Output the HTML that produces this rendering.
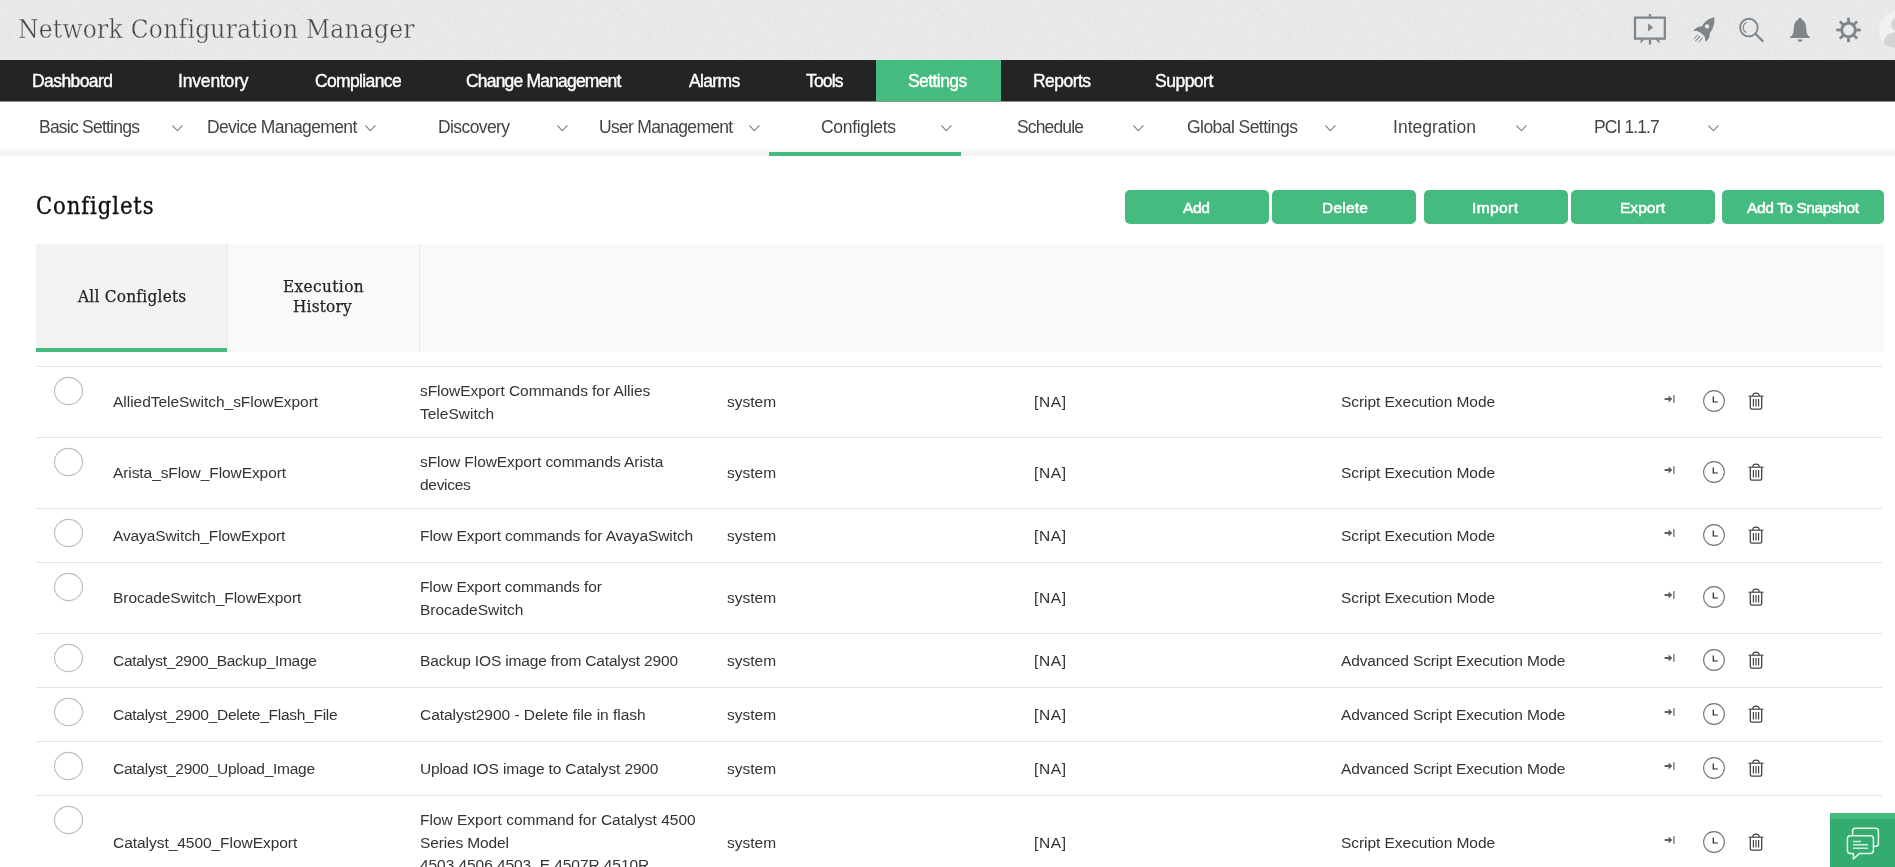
<!DOCTYPE html>
<html lang="en"><head><meta charset="utf-8"><title>Network Configuration Manager</title>
<style>
html,body{margin:0;padding:0;background:#fff;}
body{font-variant-ligatures:none;width:1895px;height:867px;overflow:hidden;position:relative;font-family:"Liberation Sans",sans-serif;}
.a{position:absolute;display:block;}
.t{position:absolute;white-space:nowrap;line-height:1;will-change:transform;}
.s{font-family:"Liberation Sans",sans-serif;}
.r{font-family:"Liberation Serif",serif;}
.d{font-family:"DejaVu Serif","Liberation Serif",serif;font-stretch:condensed;}
.nav{-webkit-text-stroke:0.4px #fff;}
.hd{-webkit-text-stroke:0.35px #111;}
.ttl{-webkit-text-stroke:0.4px #e8e9ea;}
.btn{-webkit-text-stroke:0.55px #fff;}
.tb{-webkit-text-stroke:0.25px #222;}
.hline{position:absolute;left:36px;width:1846px;height:1px;background:#e3e3e3;}
.gbtn{position:absolute;top:190px;height:34px;border-radius:5px;background:#45bb7f;}
</style></head>
<body>
<div class="a" style="left:0;top:0;width:1895px;height:60px;background:#ebeced"></div>
<svg class="a" style="left:0;top:0" width="1895" height="60"><filter id="nz" x="0" y="0" width="100%" height="100%"><feTurbulence type="fractalNoise" baseFrequency="0.8" numOctaves="2" seed="3"/><feColorMatrix type="matrix" values="0 0 0 0 0.45  0 0 0 0 0.45  0 0 0 0 0.45  0.55 0.55 0 0 -0.42"/></filter><rect width="1895" height="60" filter="url(#nz)" opacity="0.5"/></svg>

<svg class="a" style="left:1630px;top:10px" width="40" height="40" viewBox="0 0 40 40">
 <g fill="#808487">
 <path d="M3.9 6.5 H35.9 V29.8 H3.9 Z M6.1 8.8 V27.5 H33.7 V8.8 Z" fill-rule="evenodd"/>
 <rect x="18.8" y="4.1" width="2.3" height="2.6"/>
 <rect x="18.8" y="29.6" width="2.3" height="4.8"/>
 <path d="M18.1 13.6 L23.2 17.6 L18.1 21.6 Z"/>
 <path d="M11 29.6 H14.2 L11.4 32.8 H10.2 Z"/>
 <path d="M25.8 29.6 H29 L29.8 32.8 H28.6 Z"/>
 </g>
</svg>
<svg class="a" style="left:1690px;top:14px" width="28" height="30" viewBox="0 0 28 30">
 <g fill="#808487">
 <path d="M24.4 3.3 C19 4.2 14.6 7.6 11.7 12.6 C8.2 12.4 5.2 14.2 3.1 16.9 C5.4 16.6 7.6 16.9 9.4 18 C11.5 19.2 13.7 21 15 23.2 C14.9 24.8 15.2 26.4 16 27.6 C18.6 25.6 20 22.6 19.8 19.2 C23.4 14.8 24.9 9.2 24.4 3.3 Z M17 10.2 A2.2 2.2 0 1 0 17.01 10.2 Z" fill-rule="evenodd"/>
 <path d="M7.3 20.4 L8 21 L4.3 25.2 L3.7 24.7 Z M9.6 21.8 L10.5 22.5 L5.8 27.6 L5 27 Z M12 23.6 L12.8 24.3 L9.2 28.3 L8.5 27.7 Z"/>
 </g>
</svg>
<svg class="a" style="left:1736px;top:14px" width="30" height="30" viewBox="0 0 30 30">
 <g fill="none" stroke="#808487">
 <circle cx="12.9" cy="13.6" r="8.8" stroke-width="1.9"/>
 <path d="M10.6 8.4 A5.6 5.6 0 0 0 10.4 18.6" stroke-width="1.1"/>
 <path d="M19.6 20 L26.6 27" stroke-width="2.3" stroke-linecap="round"/>
 </g>
</svg>
<svg class="a" style="left:1786px;top:14px" width="28" height="30" viewBox="0 0 28 30">
 <g fill="#808487">
 <path d="M14 3.8 C15.1 3.8 15.8 4.6 15.8 5.8 C18.6 6.8 19.9 9.6 20.1 13 C20.3 17.2 20.8 19.6 21.6 20.9 C22.3 21.9 23.9 22.4 23.9 23.2 V24.1 H4.1 V23.2 C4.1 22.4 5.7 21.9 6.4 20.9 C7.2 19.6 7.7 17.2 7.9 13 C8.1 9.6 9.4 6.8 12.2 5.8 C12.2 4.6 12.9 3.8 14 3.8 Z"/>
 <path d="M11.6 25.4 H16.4 C16.2 26.8 15.2 27.7 14 27.7 C12.8 27.7 11.8 26.8 11.6 25.4 Z"/>
 </g>
</svg>
<svg class="a" style="left:1834px;top:15px" width="30" height="30" viewBox="0 0 30 30">
 <g transform="translate(14.5 15)">
 <circle r="6.85" fill="none" stroke="#808487" stroke-width="2.9"/>
 <g fill="#808487">
  <rect x="-1.4" y="-12.2" width="2.8" height="4.6"/>
  <rect x="-1.4" y="-12.2" width="2.8" height="4.6" transform="rotate(45)"/>
  <rect x="-1.4" y="-12.2" width="2.8" height="4.6" transform="rotate(90)"/>
  <rect x="-1.4" y="-12.2" width="2.8" height="4.6" transform="rotate(135)"/>
  <rect x="-1.4" y="-12.2" width="2.8" height="4.6" transform="rotate(180)"/>
  <rect x="-1.4" y="-12.2" width="2.8" height="4.6" transform="rotate(225)"/>
  <rect x="-1.4" y="-12.2" width="2.8" height="4.6" transform="rotate(270)"/>
  <rect x="-1.4" y="-12.2" width="2.8" height="4.6" transform="rotate(315)"/>
 </g></g>
</svg>
<svg class="a" style="left:1877px;top:11px" width="18" height="38" viewBox="0 0 18 38">
 <circle cx="20.5" cy="19" r="18.5" fill="#f1f1f1"/>
 <circle cx="20.5" cy="13.5" r="6.6" fill="#d4d4d4"/>
 <path d="M6.5 31.5 C7.5 24.5 13 21 20.5 21 V37 C14 37 9 35 6.5 31.5 Z" fill="#d4d4d4"/>
</svg>

<div class="a" style="left:0;top:60px;width:1895px;height:41px;background:#242424"></div>
<div class="a" style="left:0;top:101px;width:1895px;height:1px;background:#8f8f8f"></div>
<div class="a" style="left:876px;top:60px;width:125px;height:41px;background:#45bb7f"></div>
<div class="a" style="left:0;top:146px;width:1895px;height:10px;background:linear-gradient(#ffffff,#f8f8f8 50%,#f0f0f0)"></div>
<div class="a" style="left:769px;top:152px;width:192px;height:4px;background:#45bb7f"></div>
<svg class="a" style="left:171.9px;top:125px" width="11" height="7" viewBox="0 0 11 7"><path d="M0.4 0.5 L5.4 5.7 L10.4 0.5" fill="none" stroke="#888" stroke-width="1.1"/></svg>
<svg class="a" style="left:364.9px;top:125px" width="11" height="7" viewBox="0 0 11 7"><path d="M0.4 0.5 L5.4 5.7 L10.4 0.5" fill="none" stroke="#888" stroke-width="1.1"/></svg>
<svg class="a" style="left:556.9px;top:125px" width="11" height="7" viewBox="0 0 11 7"><path d="M0.4 0.5 L5.4 5.7 L10.4 0.5" fill="none" stroke="#888" stroke-width="1.1"/></svg>
<svg class="a" style="left:748.9px;top:125px" width="11" height="7" viewBox="0 0 11 7"><path d="M0.4 0.5 L5.4 5.7 L10.4 0.5" fill="none" stroke="#888" stroke-width="1.1"/></svg>
<svg class="a" style="left:940.8px;top:125px" width="11" height="7" viewBox="0 0 11 7"><path d="M0.4 0.5 L5.4 5.7 L10.4 0.5" fill="none" stroke="#888" stroke-width="1.1"/></svg>
<svg class="a" style="left:1132.6px;top:125px" width="11" height="7" viewBox="0 0 11 7"><path d="M0.4 0.5 L5.4 5.7 L10.4 0.5" fill="none" stroke="#888" stroke-width="1.1"/></svg>
<svg class="a" style="left:1324.8px;top:125px" width="11" height="7" viewBox="0 0 11 7"><path d="M0.4 0.5 L5.4 5.7 L10.4 0.5" fill="none" stroke="#888" stroke-width="1.1"/></svg>
<svg class="a" style="left:1516.3px;top:125px" width="11" height="7" viewBox="0 0 11 7"><path d="M0.4 0.5 L5.4 5.7 L10.4 0.5" fill="none" stroke="#888" stroke-width="1.1"/></svg>
<svg class="a" style="left:1707.9px;top:125px" width="11" height="7" viewBox="0 0 11 7"><path d="M0.4 0.5 L5.4 5.7 L10.4 0.5" fill="none" stroke="#888" stroke-width="1.1"/></svg>
<div class="gbtn" style="left:1125px;width:144px"></div>
<div class="gbtn" style="left:1272px;width:144px"></div>
<div class="gbtn" style="left:1424px;width:144px"></div>
<div class="gbtn" style="left:1571px;width:144px"></div>
<div class="gbtn" style="left:1722px;width:162px"></div>
<div class="a" style="left:36px;top:244px;width:1848px;height:108px;background:#f9f9f9"></div>
<div class="a" style="left:36px;top:244px;width:191px;height:108px;background:#f2f2f2"></div>
<div class="a" style="left:36px;top:348px;width:191px;height:4px;background:#45bb7f"></div>
<div class="a" style="left:227px;top:244px;width:1px;height:104px;background:#e6e6e6"></div>
<div class="a" style="left:419px;top:244px;width:1px;height:108px;background:#e6e6e6"></div>
<div class="hline" style="top:366.0px"></div>
<svg class="a" style="left:52px;top:375px" width="33" height="32" viewBox="0 0 33 32"><ellipse cx="16.5" cy="16" rx="14" ry="13.6" fill="#fff" stroke="#bebebe" stroke-width="1.15"/></svg>
<svg class="a" style="left:1663px;top:393px" width="14" height="12" viewBox="0 0 14 12"><path d="M1.6 5 H5.6 V2.5 L9.3 6 L5.6 9.5 V7 H1.6 Z" fill="#5e5e5e"/><rect x="10.3" y="2.2" width="1.2" height="7.6" fill="#5e5e5e"/></svg><svg class="a" style="left:1702px;top:389px" width="24" height="24" viewBox="0 0 24 24"><circle cx="12" cy="12" r="10.4" fill="none" stroke="#777" stroke-width="1.1"/><path d="M11.3 7.6 V13 H15.8" fill="none" stroke="#222" stroke-width="1.2"/></svg><svg class="a" style="left:1747px;top:391px" width="18" height="20" viewBox="0 0 18 20"><path d="M1.6 5.2 H16.4" stroke="#444" stroke-width="1.2" fill="none"/><path d="M5.8 5 C5.8 2.6 6.6 2.2 9 2.2 C11.4 2.2 12.2 2.6 12.2 5" stroke="#444" stroke-width="1.2" fill="none"/><path d="M3.3 5.4 V16.6 Q3.3 18.2 4.9 18.2 H13.1 Q14.7 18.2 14.7 16.6 V5.4" stroke="#444" stroke-width="1.3" fill="none"/><path d="M6.4 8 V15.4 M9 8 V15.4 M11.6 8 V15.4" stroke="#444" stroke-width="1.2" fill="none"/></svg>
<div class="hline" style="top:437.0px"></div>
<svg class="a" style="left:52px;top:446px" width="33" height="32" viewBox="0 0 33 32"><ellipse cx="16.5" cy="16" rx="14" ry="13.6" fill="#fff" stroke="#bebebe" stroke-width="1.15"/></svg>
<svg class="a" style="left:1663px;top:464px" width="14" height="12" viewBox="0 0 14 12"><path d="M1.6 5 H5.6 V2.5 L9.3 6 L5.6 9.5 V7 H1.6 Z" fill="#5e5e5e"/><rect x="10.3" y="2.2" width="1.2" height="7.6" fill="#5e5e5e"/></svg><svg class="a" style="left:1702px;top:460px" width="24" height="24" viewBox="0 0 24 24"><circle cx="12" cy="12" r="10.4" fill="none" stroke="#777" stroke-width="1.1"/><path d="M11.3 7.6 V13 H15.8" fill="none" stroke="#222" stroke-width="1.2"/></svg><svg class="a" style="left:1747px;top:462px" width="18" height="20" viewBox="0 0 18 20"><path d="M1.6 5.2 H16.4" stroke="#444" stroke-width="1.2" fill="none"/><path d="M5.8 5 C5.8 2.6 6.6 2.2 9 2.2 C11.4 2.2 12.2 2.6 12.2 5" stroke="#444" stroke-width="1.2" fill="none"/><path d="M3.3 5.4 V16.6 Q3.3 18.2 4.9 18.2 H13.1 Q14.7 18.2 14.7 16.6 V5.4" stroke="#444" stroke-width="1.3" fill="none"/><path d="M6.4 8 V15.4 M9 8 V15.4 M11.6 8 V15.4" stroke="#444" stroke-width="1.2" fill="none"/></svg>
<div class="hline" style="top:508.0px"></div>
<svg class="a" style="left:52px;top:517px" width="33" height="32" viewBox="0 0 33 32"><ellipse cx="16.5" cy="16" rx="14" ry="13.6" fill="#fff" stroke="#bebebe" stroke-width="1.15"/></svg>
<svg class="a" style="left:1663px;top:527.25px" width="14" height="12" viewBox="0 0 14 12"><path d="M1.6 5 H5.6 V2.5 L9.3 6 L5.6 9.5 V7 H1.6 Z" fill="#5e5e5e"/><rect x="10.3" y="2.2" width="1.2" height="7.6" fill="#5e5e5e"/></svg><svg class="a" style="left:1702px;top:523.25px" width="24" height="24" viewBox="0 0 24 24"><circle cx="12" cy="12" r="10.4" fill="none" stroke="#777" stroke-width="1.1"/><path d="M11.3 7.6 V13 H15.8" fill="none" stroke="#222" stroke-width="1.2"/></svg><svg class="a" style="left:1747px;top:525.25px" width="18" height="20" viewBox="0 0 18 20"><path d="M1.6 5.2 H16.4" stroke="#444" stroke-width="1.2" fill="none"/><path d="M5.8 5 C5.8 2.6 6.6 2.2 9 2.2 C11.4 2.2 12.2 2.6 12.2 5" stroke="#444" stroke-width="1.2" fill="none"/><path d="M3.3 5.4 V16.6 Q3.3 18.2 4.9 18.2 H13.1 Q14.7 18.2 14.7 16.6 V5.4" stroke="#444" stroke-width="1.3" fill="none"/><path d="M6.4 8 V15.4 M9 8 V15.4 M11.6 8 V15.4" stroke="#444" stroke-width="1.2" fill="none"/></svg>
<div class="hline" style="top:562.0px"></div>
<svg class="a" style="left:52px;top:571px" width="33" height="32" viewBox="0 0 33 32"><ellipse cx="16.5" cy="16" rx="14" ry="13.6" fill="#fff" stroke="#bebebe" stroke-width="1.15"/></svg>
<svg class="a" style="left:1663px;top:589.25px" width="14" height="12" viewBox="0 0 14 12"><path d="M1.6 5 H5.6 V2.5 L9.3 6 L5.6 9.5 V7 H1.6 Z" fill="#5e5e5e"/><rect x="10.3" y="2.2" width="1.2" height="7.6" fill="#5e5e5e"/></svg><svg class="a" style="left:1702px;top:585.25px" width="24" height="24" viewBox="0 0 24 24"><circle cx="12" cy="12" r="10.4" fill="none" stroke="#777" stroke-width="1.1"/><path d="M11.3 7.6 V13 H15.8" fill="none" stroke="#222" stroke-width="1.2"/></svg><svg class="a" style="left:1747px;top:587.25px" width="18" height="20" viewBox="0 0 18 20"><path d="M1.6 5.2 H16.4" stroke="#444" stroke-width="1.2" fill="none"/><path d="M5.8 5 C5.8 2.6 6.6 2.2 9 2.2 C11.4 2.2 12.2 2.6 12.2 5" stroke="#444" stroke-width="1.2" fill="none"/><path d="M3.3 5.4 V16.6 Q3.3 18.2 4.9 18.2 H13.1 Q14.7 18.2 14.7 16.6 V5.4" stroke="#444" stroke-width="1.3" fill="none"/><path d="M6.4 8 V15.4 M9 8 V15.4 M11.6 8 V15.4" stroke="#444" stroke-width="1.2" fill="none"/></svg>
<div class="hline" style="top:633.0px"></div>
<svg class="a" style="left:52px;top:642px" width="33" height="32" viewBox="0 0 33 32"><ellipse cx="16.5" cy="16" rx="14" ry="13.6" fill="#fff" stroke="#bebebe" stroke-width="1.15"/></svg>
<svg class="a" style="left:1663px;top:652px" width="14" height="12" viewBox="0 0 14 12"><path d="M1.6 5 H5.6 V2.5 L9.3 6 L5.6 9.5 V7 H1.6 Z" fill="#5e5e5e"/><rect x="10.3" y="2.2" width="1.2" height="7.6" fill="#5e5e5e"/></svg><svg class="a" style="left:1702px;top:648px" width="24" height="24" viewBox="0 0 24 24"><circle cx="12" cy="12" r="10.4" fill="none" stroke="#777" stroke-width="1.1"/><path d="M11.3 7.6 V13 H15.8" fill="none" stroke="#222" stroke-width="1.2"/></svg><svg class="a" style="left:1747px;top:650px" width="18" height="20" viewBox="0 0 18 20"><path d="M1.6 5.2 H16.4" stroke="#444" stroke-width="1.2" fill="none"/><path d="M5.8 5 C5.8 2.6 6.6 2.2 9 2.2 C11.4 2.2 12.2 2.6 12.2 5" stroke="#444" stroke-width="1.2" fill="none"/><path d="M3.3 5.4 V16.6 Q3.3 18.2 4.9 18.2 H13.1 Q14.7 18.2 14.7 16.6 V5.4" stroke="#444" stroke-width="1.3" fill="none"/><path d="M6.4 8 V15.4 M9 8 V15.4 M11.6 8 V15.4" stroke="#444" stroke-width="1.2" fill="none"/></svg>
<div class="hline" style="top:687.0px"></div>
<svg class="a" style="left:52px;top:696px" width="33" height="32" viewBox="0 0 33 32"><ellipse cx="16.5" cy="16" rx="14" ry="13.6" fill="#fff" stroke="#bebebe" stroke-width="1.15"/></svg>
<svg class="a" style="left:1663px;top:706px" width="14" height="12" viewBox="0 0 14 12"><path d="M1.6 5 H5.6 V2.5 L9.3 6 L5.6 9.5 V7 H1.6 Z" fill="#5e5e5e"/><rect x="10.3" y="2.2" width="1.2" height="7.6" fill="#5e5e5e"/></svg><svg class="a" style="left:1702px;top:702px" width="24" height="24" viewBox="0 0 24 24"><circle cx="12" cy="12" r="10.4" fill="none" stroke="#777" stroke-width="1.1"/><path d="M11.3 7.6 V13 H15.8" fill="none" stroke="#222" stroke-width="1.2"/></svg><svg class="a" style="left:1747px;top:704px" width="18" height="20" viewBox="0 0 18 20"><path d="M1.6 5.2 H16.4" stroke="#444" stroke-width="1.2" fill="none"/><path d="M5.8 5 C5.8 2.6 6.6 2.2 9 2.2 C11.4 2.2 12.2 2.6 12.2 5" stroke="#444" stroke-width="1.2" fill="none"/><path d="M3.3 5.4 V16.6 Q3.3 18.2 4.9 18.2 H13.1 Q14.7 18.2 14.7 16.6 V5.4" stroke="#444" stroke-width="1.3" fill="none"/><path d="M6.4 8 V15.4 M9 8 V15.4 M11.6 8 V15.4" stroke="#444" stroke-width="1.2" fill="none"/></svg>
<div class="hline" style="top:741.0px"></div>
<svg class="a" style="left:52px;top:750px" width="33" height="32" viewBox="0 0 33 32"><ellipse cx="16.5" cy="16" rx="14" ry="13.6" fill="#fff" stroke="#bebebe" stroke-width="1.15"/></svg>
<svg class="a" style="left:1663px;top:760px" width="14" height="12" viewBox="0 0 14 12"><path d="M1.6 5 H5.6 V2.5 L9.3 6 L5.6 9.5 V7 H1.6 Z" fill="#5e5e5e"/><rect x="10.3" y="2.2" width="1.2" height="7.6" fill="#5e5e5e"/></svg><svg class="a" style="left:1702px;top:756px" width="24" height="24" viewBox="0 0 24 24"><circle cx="12" cy="12" r="10.4" fill="none" stroke="#777" stroke-width="1.1"/><path d="M11.3 7.6 V13 H15.8" fill="none" stroke="#222" stroke-width="1.2"/></svg><svg class="a" style="left:1747px;top:758px" width="18" height="20" viewBox="0 0 18 20"><path d="M1.6 5.2 H16.4" stroke="#444" stroke-width="1.2" fill="none"/><path d="M5.8 5 C5.8 2.6 6.6 2.2 9 2.2 C11.4 2.2 12.2 2.6 12.2 5" stroke="#444" stroke-width="1.2" fill="none"/><path d="M3.3 5.4 V16.6 Q3.3 18.2 4.9 18.2 H13.1 Q14.7 18.2 14.7 16.6 V5.4" stroke="#444" stroke-width="1.3" fill="none"/><path d="M6.4 8 V15.4 M9 8 V15.4 M11.6 8 V15.4" stroke="#444" stroke-width="1.2" fill="none"/></svg>
<div class="hline" style="top:795.0px"></div>
<svg class="a" style="left:52px;top:804px" width="33" height="32" viewBox="0 0 33 32"><ellipse cx="16.5" cy="16" rx="14" ry="13.6" fill="#fff" stroke="#bebebe" stroke-width="1.15"/></svg>
<svg class="a" style="left:1663px;top:834px" width="14" height="12" viewBox="0 0 14 12"><path d="M1.6 5 H5.6 V2.5 L9.3 6 L5.6 9.5 V7 H1.6 Z" fill="#5e5e5e"/><rect x="10.3" y="2.2" width="1.2" height="7.6" fill="#5e5e5e"/></svg><svg class="a" style="left:1702px;top:830px" width="24" height="24" viewBox="0 0 24 24"><circle cx="12" cy="12" r="10.4" fill="none" stroke="#777" stroke-width="1.1"/><path d="M11.3 7.6 V13 H15.8" fill="none" stroke="#222" stroke-width="1.2"/></svg><svg class="a" style="left:1747px;top:832px" width="18" height="20" viewBox="0 0 18 20"><path d="M1.6 5.2 H16.4" stroke="#444" stroke-width="1.2" fill="none"/><path d="M5.8 5 C5.8 2.6 6.6 2.2 9 2.2 C11.4 2.2 12.2 2.6 12.2 5" stroke="#444" stroke-width="1.2" fill="none"/><path d="M3.3 5.4 V16.6 Q3.3 18.2 4.9 18.2 H13.1 Q14.7 18.2 14.7 16.6 V5.4" stroke="#444" stroke-width="1.3" fill="none"/><path d="M6.4 8 V15.4 M9 8 V15.4 M11.6 8 V15.4" stroke="#444" stroke-width="1.2" fill="none"/></svg>
<span class="t d ttl" id="t0" style="left:18px;top:16.0px;font-size:26px;color:#464646;letter-spacing:0.259px;">Network Configuration Manager</span>
<span class="t s nav" id="t1" style="left:32px;top:73.0px;font-size:17.5px;color:#fff;letter-spacing:-0.575px;">Dashboard</span>
<span class="t s nav" id="t2" style="left:178px;top:73.0px;font-size:17.5px;color:#fff;letter-spacing:-0.175px;">Inventory</span>
<span class="t s nav" id="t3" style="left:315px;top:73.0px;font-size:17.5px;color:#fff;letter-spacing:-0.639px;">Compliance</span>
<span class="t s nav" id="t4" style="left:466px;top:73.0px;font-size:17.5px;color:#fff;letter-spacing:-0.812px;">Change Management</span>
<span class="t s nav" id="t5" style="left:689px;top:73.0px;font-size:17.5px;color:#fff;letter-spacing:-0.650px;">Alarms</span>
<span class="t s nav" id="t6" style="left:806px;top:73.0px;font-size:17.5px;color:#fff;letter-spacing:-0.812px;">Tools</span>
<span class="t s nav" id="t7" style="left:908px;top:73.0px;font-size:17.5px;color:#fff;letter-spacing:-0.571px;">Settings</span>
<span class="t s nav" id="t8" style="left:1033px;top:73.0px;font-size:17.5px;color:#fff;letter-spacing:-0.542px;">Reports</span>
<span class="t s nav" id="t9" style="left:1155px;top:73.0px;font-size:17.5px;color:#fff;letter-spacing:-0.500px;">Support</span>
<span class="t s" id="t10" style="left:39px;top:119.0px;font-size:17.5px;color:#444;letter-spacing:-0.769px;">Basic Settings</span>
<span class="t s" id="t11" style="left:207px;top:119.0px;font-size:17.5px;color:#444;letter-spacing:-0.641px;">Device Management</span>
<span class="t s" id="t12" style="left:438px;top:119.0px;font-size:17.5px;color:#444;letter-spacing:-0.594px;">Discovery</span>
<span class="t s" id="t13" style="left:599px;top:119.0px;font-size:17.5px;color:#444;letter-spacing:-0.696px;">User Management</span>
<span class="t s" id="t14" style="left:821px;top:119.0px;font-size:17.5px;color:#444;letter-spacing:-0.306px;">Configlets</span>
<span class="t s" id="t15" style="left:1017px;top:119.0px;font-size:17.5px;color:#444;letter-spacing:-0.857px;">Schedule</span>
<span class="t s" id="t16" style="left:1187px;top:119.0px;font-size:17.5px;color:#444;letter-spacing:-0.554px;">Global Settings</span>
<span class="t s" id="t17" style="left:1393px;top:119.0px;font-size:17.5px;color:#444;letter-spacing:0.020px;">Integration</span>
<span class="t s" id="t18" style="left:1594px;top:119.0px;font-size:17.5px;color:#444;letter-spacing:-0.906px;">PCI 1.1.7</span>
<span class="t d hd" id="t19" style="left:36px;top:195.0px;font-size:23.5px;color:#111;letter-spacing:0.929px;">Configlets</span>
<span class="t s btn" id="t20" style="left:1183px;top:200.0px;font-size:15.5px;color:#fff;letter-spacing:-0.375px;">Add</span>
<span class="t s btn" id="t21" style="left:1322px;top:200.0px;font-size:15.5px;color:#fff;letter-spacing:0.224px;">Delete</span>
<span class="t s btn" id="t22" style="left:1472px;top:200.0px;font-size:15.5px;color:#fff;letter-spacing:0.410px;">Import</span>
<span class="t s btn" id="t23" style="left:1620px;top:200.0px;font-size:15.5px;color:#fff;letter-spacing:0.030px;">Export</span>
<span class="t s btn" id="t24" style="left:1747px;top:200.0px;font-size:15.5px;color:#fff;letter-spacing:-0.411px;">Add To Snapshot</span>
<span class="t d tb" id="t25" style="left:78px;top:288.0px;font-size:17px;color:#222;letter-spacing:0.269px;">All Configlets</span>
<span class="t d tb" id="t26" style="left:283px;top:278.0px;font-size:17px;color:#222;letter-spacing:0.406px;">Execution</span>
<span class="t d tb" id="t27" style="left:293px;top:298.0px;font-size:17px;color:#222;letter-spacing:0.208px;">History</span>
<span class="t s" id="t28" style="left:113px;top:394.0px;font-size:15.5px;color:#333;letter-spacing:-0.028px;">AlliedTeleSwitch_sFlowExport</span>
<span class="t s" id="t29" style="left:420px;top:383.0px;font-size:15.5px;color:#333;letter-spacing:-0.050px;">sFlowExport Commands for Allies</span>
<span class="t s" id="t30" style="left:420px;top:406.0px;font-size:15.5px;color:#333;">TeleSwitch</span>
<span class="t s" id="t31" style="left:727px;top:394.0px;font-size:15.5px;color:#333;">system</span>
<span class="t s" id="t32" style="left:1034px;top:394.0px;font-size:15.5px;color:#333;letter-spacing:0.667px;">[NA]</span>
<span class="t s" id="t33" style="left:1341px;top:394.0px;font-size:15.5px;color:#333;letter-spacing:-0.050px;">Script Execution Mode</span>
<span class="t s" id="t34" style="left:113px;top:465.0px;font-size:15.5px;color:#333;letter-spacing:-0.082px;">Arista_sFlow_FlowExport</span>
<span class="t s" id="t35" style="left:420px;top:454.0px;font-size:15.5px;color:#333;letter-spacing:-0.071px;">sFlow FlowExport commands Arista</span>
<span class="t s" id="t36" style="left:420px;top:477.0px;font-size:15.5px;color:#333;letter-spacing:-0.292px;">devices</span>
<span class="t s" id="t37" style="left:727px;top:465.0px;font-size:15.5px;color:#333;">system</span>
<span class="t s" id="t38" style="left:1034px;top:465.0px;font-size:15.5px;color:#333;letter-spacing:0.667px;">[NA]</span>
<span class="t s" id="t39" style="left:1341px;top:465.0px;font-size:15.5px;color:#333;letter-spacing:-0.050px;">Script Execution Mode</span>
<span class="t s" id="t40" style="left:113px;top:528.0px;font-size:15.5px;color:#333;letter-spacing:-0.105px;">AvayaSwitch_FlowExport</span>
<span class="t s" id="t41" style="left:420px;top:528.0px;font-size:15.5px;color:#333;letter-spacing:-0.086px;">Flow Export commands for AvayaSwitch</span>
<span class="t s" id="t42" style="left:727px;top:528.0px;font-size:15.5px;color:#333;">system</span>
<span class="t s" id="t43" style="left:1034px;top:528.0px;font-size:15.5px;color:#333;letter-spacing:0.667px;">[NA]</span>
<span class="t s" id="t44" style="left:1341px;top:528.0px;font-size:15.5px;color:#333;letter-spacing:-0.050px;">Script Execution Mode</span>
<span class="t s" id="t45" style="left:113px;top:590.0px;font-size:15.5px;color:#333;letter-spacing:-0.052px;">BrocadeSwitch_FlowExport</span>
<span class="t s" id="t46" style="left:420px;top:579.0px;font-size:15.5px;color:#333;letter-spacing:-0.109px;">Flow Export commands for</span>
<span class="t s" id="t47" style="left:420px;top:602.0px;font-size:15.5px;color:#333;">BrocadeSwitch</span>
<span class="t s" id="t48" style="left:727px;top:590.0px;font-size:15.5px;color:#333;">system</span>
<span class="t s" id="t49" style="left:1034px;top:590.0px;font-size:15.5px;color:#333;letter-spacing:0.667px;">[NA]</span>
<span class="t s" id="t50" style="left:1341px;top:590.0px;font-size:15.5px;color:#333;letter-spacing:-0.050px;">Script Execution Mode</span>
<span class="t s" id="t51" style="left:113px;top:653.0px;font-size:15.5px;color:#333;letter-spacing:-0.290px;">Catalyst_2900_Backup_Image</span>
<span class="t s" id="t52" style="left:420px;top:653.0px;font-size:15.5px;color:#333;letter-spacing:-0.162px;">Backup IOS image from Catalyst 2900</span>
<span class="t s" id="t53" style="left:727px;top:653.0px;font-size:15.5px;color:#333;">system</span>
<span class="t s" id="t54" style="left:1034px;top:653.0px;font-size:15.5px;color:#333;letter-spacing:0.667px;">[NA]</span>
<span class="t s" id="t55" style="left:1341px;top:653.0px;font-size:15.5px;color:#333;letter-spacing:-0.138px;">Advanced Script Execution Mode</span>
<span class="t s" id="t56" style="left:113px;top:707.0px;font-size:15.5px;color:#333;letter-spacing:-0.267px;">Catalyst_2900_Delete_Flash_File</span>
<span class="t s" id="t57" style="left:420px;top:707.0px;font-size:15.5px;color:#333;letter-spacing:-0.029px;">Catalyst2900 - Delete file in flash</span>
<span class="t s" id="t58" style="left:727px;top:707.0px;font-size:15.5px;color:#333;">system</span>
<span class="t s" id="t59" style="left:1034px;top:707.0px;font-size:15.5px;color:#333;letter-spacing:0.667px;">[NA]</span>
<span class="t s" id="t60" style="left:1341px;top:707.0px;font-size:15.5px;color:#333;letter-spacing:-0.138px;">Advanced Script Execution Mode</span>
<span class="t s" id="t61" style="left:113px;top:761.0px;font-size:15.5px;color:#333;letter-spacing:-0.260px;">Catalyst_2900_Upload_Image</span>
<span class="t s" id="t62" style="left:420px;top:761.0px;font-size:15.5px;color:#333;letter-spacing:-0.141px;">Upload IOS image to Catalyst 2900</span>
<span class="t s" id="t63" style="left:727px;top:761.0px;font-size:15.5px;color:#333;">system</span>
<span class="t s" id="t64" style="left:1034px;top:761.0px;font-size:15.5px;color:#333;letter-spacing:0.667px;">[NA]</span>
<span class="t s" id="t65" style="left:1341px;top:761.0px;font-size:15.5px;color:#333;letter-spacing:-0.138px;">Advanced Script Execution Mode</span>
<span class="t s" id="t66" style="left:113px;top:835.0px;font-size:15.5px;color:#333;letter-spacing:-0.043px;">Catalyst_4500_FlowExport</span>
<span class="t s" id="t67" style="left:420px;top:812.0px;font-size:15.5px;color:#333;">Flow Export command for Catalyst 4500</span>
<span class="t s" id="t68" style="left:420px;top:835.0px;font-size:15.5px;color:#333;letter-spacing:-0.136px;">Series Model</span>
<span class="t s" id="t69" style="left:420px;top:857.0px;font-size:15.5px;color:#333;letter-spacing:-0.065px;">4503,4506,4503_E,4507R,4510R</span>
<span class="t s" id="t70" style="left:727px;top:835.0px;font-size:15.5px;color:#333;">system</span>
<span class="t s" id="t71" style="left:1034px;top:835.0px;font-size:15.5px;color:#333;letter-spacing:0.667px;">[NA]</span>
<span class="t s" id="t72" style="left:1341px;top:835.0px;font-size:15.5px;color:#333;letter-spacing:-0.050px;">Script Execution Mode</span>

<div class="a" style="left:1830px;top:813px;width:65px;height:54px;background:#35ac6f"></div>
<div class="a" style="left:1830px;top:813px;width:65px;height:6px;background:#45bb7f"></div>
<svg class="a" style="left:1844px;top:824.5px" width="38" height="36" viewBox="0 0 38 36">
 <g fill="none" stroke="#e6f6ee" stroke-width="1.5" stroke-linejoin="round">
 <path d="M8.6 10.6 V6 Q8.6 3.2 11.4 3.2 H31.6 Q34.4 3.2 34.4 6 V18.4 Q34.4 21.2 31.6 21.2 H29.6"/>
 <path d="M6.2 10.8 H26.6 Q29.4 10.8 29.4 13.6 V25.6 Q29.4 28.4 26.6 28.4 H15.6 L9.4 34 V28.4 H6.2 Q3.4 28.4 3.4 25.6 V13.6 Q3.4 10.8 6.2 10.8 Z"/>
 </g>
 <path d="M9 16.6 H17 M9 19.8 H24 M9 23.2 H24" stroke="#cfeede" stroke-width="1.5" fill="none"/>
</svg>

</body></html>
